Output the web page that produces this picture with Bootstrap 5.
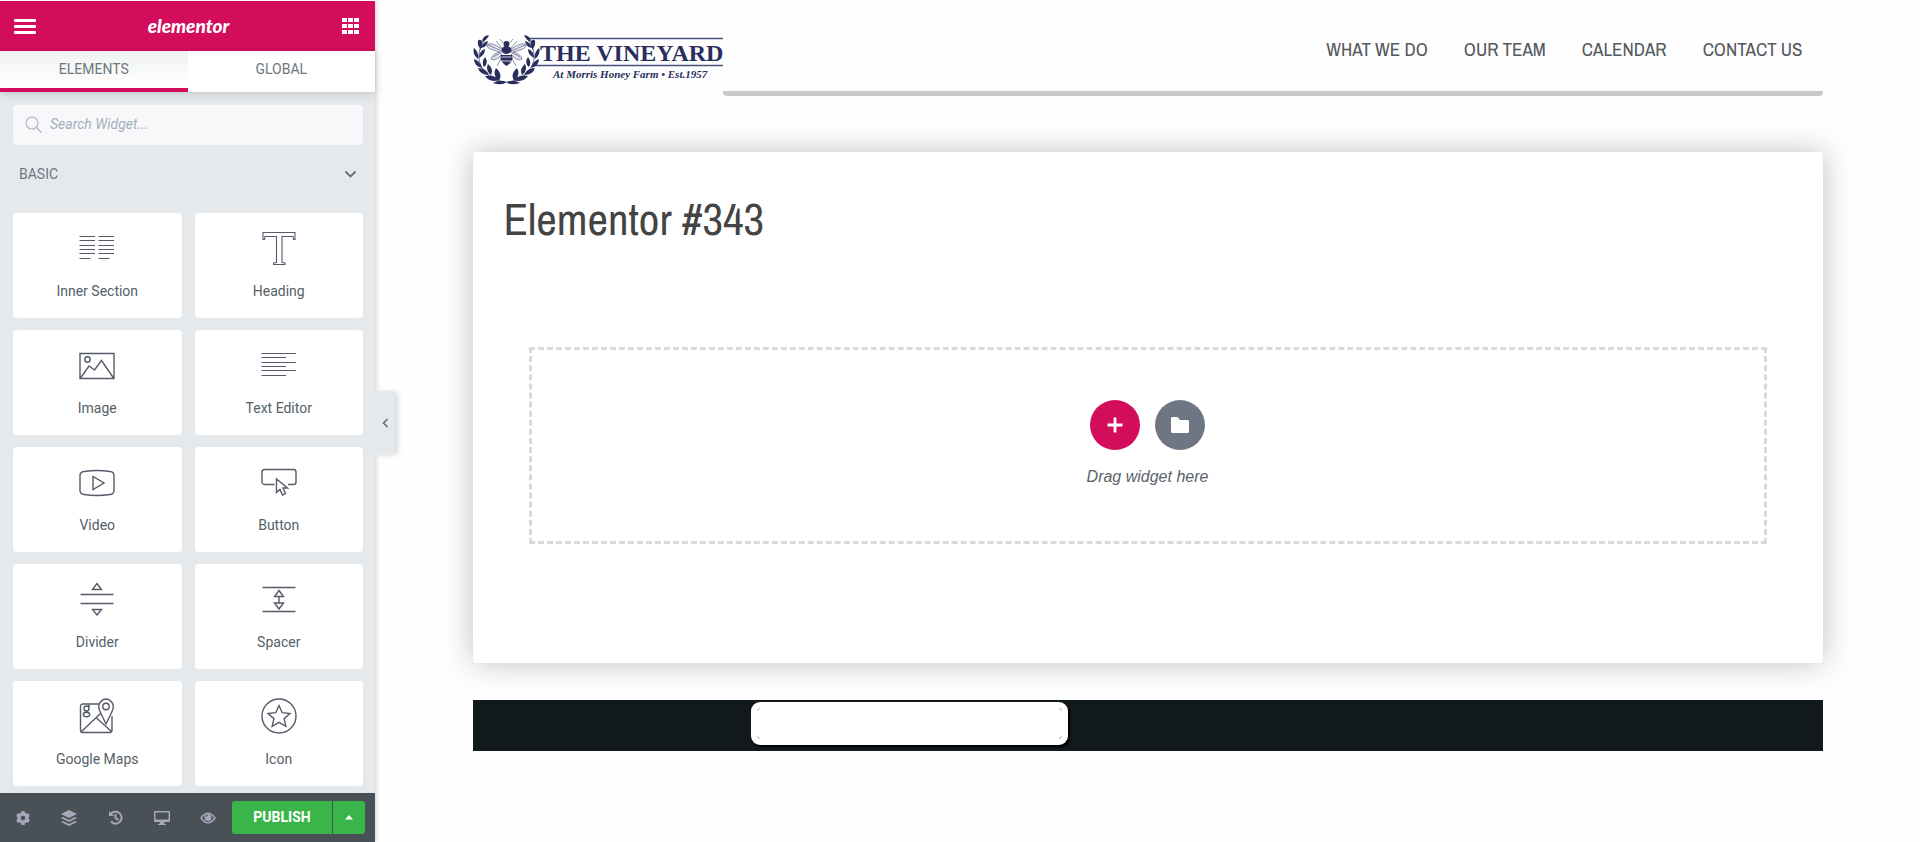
<!DOCTYPE html>
<html lang="en">
<head>
<meta charset="utf-8">
<meta name="viewport" content="width=device-width, initial-scale=1">
<title>Elementor #343</title>
<link href="https://cdn.jsdelivr.net/npm/bootstrap@5.3.0/dist/css/bootstrap.min.css" rel="stylesheet">
<style>
:root { --brand:#d30c5c; --panel:#e6e9ec; --ink:#556068; --narrow:"Archivo Narrow","Liberation Sans Narrow","Arial Narrow","Liberation Sans",sans-serif; }
body { font-family:Roboto,sans-serif; font-size:14px; color:var(--ink); background:#fefefe; }
svg { display:block; }
.editor-panel { width:375px; background:var(--panel); box-shadow:0 0 6px rgba(0,0,0,.25); border-top:1px solid #fff; z-index:2; }
.panel-top { height:50px; background:var(--brand); padding:0 14px; }
.panel-top button, .panel-tools button, .handle { border:0; background:none; padding:0; color:inherit; }
.brand-script { font:italic 900 19px/24px Lato,sans-serif; color:#fff; }
.panel-tabs { height:41px; box-shadow:0 2px 8px rgba(0,0,0,.15); background:#fff; }
.panel-tabs .nav-link { border-radius:0; color:#6d7882; font-size:14px; line-height:37px; padding:0; border-bottom:4px solid transparent; }
.panel-tabs .nav-link.active { color:#6d7882; border-color:var(--brand); background:linear-gradient(#f1f2f2,#fff); }
.panel-body { padding:13px 12px 0 13px; min-height:0; }
.search-box { height:40px; background:#f8f8fb; border-radius:4px; padding:0 12px 2px; gap:8px; }
.search-box input { font-style:italic; font-size:14px; color:var(--ink); }
.search-box input::placeholder { color:#a0b0bb; opacity:1; }
.group-toggle { height:58px; border:0; background:none; color:#6d7882; padding:0 6px; }
.widget-grid { --bs-gutter-x:13px; --bs-gutter-y:12px; padding-top:10px; }
.widget { height:105px; background:#fff; border:0; border-radius:4px; color:var(--ink); padding:0; line-height:20px; }
.widget svg { margin:0 auto 15px; fill:none; stroke:#555b68; stroke-width:1.1; }
.widget svg.firm { stroke-width:1.4; }
.panel-tools { height:49px; background:#495157; color:#a4a8b9; padding:0 10px 0 13px; }
.panel-tools .tool { width:20px; display:flex; justify-content:center; }
.tool-row { padding-right:14px; }
.panel-tools .publish { background:#39b54a; color:#fff; height:33px; font-weight:700; width:100px; border-radius:3px 0 0 3px; }
.panel-tools .more { background:#39b54a; height:33px; width:32px; border-radius:0 3px 3px 0; margin-left:1px; }
.handle { position:absolute; left:100%; top:390px; width:20px; height:63px; background:var(--panel); border-radius:0 4px 4px 0; box-shadow:3px 1px 5px rgba(0,0,0,.15); }
.site { max-width:1350px; margin:0 auto; }
.site-head { height:96px; }
.site-logo { padding-top:32px; }
.site-nav { border-bottom:5px solid #c9cacb; border-radius:0 0 4px 4px; font-family:var(--narrow); font-size:19px; padding:37px 20px 0 0; gap:36px; line-height:24px; }
.site-nav a { color:#54595f; text-decoration:none; }
.page-sheet { margin-top:56px; background:#fff; border-radius:4px; box-shadow:0 0 30px rgba(0,0,0,.25); padding:40px 56px 119px; }
.page-sheet h1 { font:400 45px/54px var(--narrow); color:#444; margin:0 0 101px -25px; }
.drop-area { border:3px dashed #d5dadf; padding:50px 0 52px; }
.round-pair { gap:15px; }
.round { width:50px; height:50px; border-radius:50%; border:0; padding:0; color:#fff; background:#6f7683; }
.round.add { background:var(--brand); }
.drop-area p { font:italic 16px/24px "Liberation Sans",sans-serif; color:#5b626a; margin:15px 0 0; }
.site-foot { margin-top:37px; height:51px; background:#12191c; padding:2px 0 6px; }
.foot-box { width:317px; margin-left:278px; height:43px; background:#fff; border-radius:9px; box-shadow:2px 2px 2px #000; padding:6px; }
</style>
</head>
<body class="d-flex vh-100 overflow-hidden">

<aside class="editor-panel d-flex flex-column flex-shrink-0 position-relative">
  <header class="panel-top d-flex align-items-center justify-content-between">
    <button aria-label="Menu"><svg width="22" height="15" fill="#fff"><path d="M1 0h20q1 0 1 1v1q0 1-1 1H1q-1 0-1-1V1q0-1 1-1zM1 6h20q1 0 1 1v1q0 1-1 1H1q-1 0-1-1V7q0-1 1-1zM1 12h20q1 0 1 1v1q0 1-1 1H1q-1 0-1-1v-1q0-1 1-1z"/></svg></button>
    <span class="brand-script">elementor</span>
    <button aria-label="Widgets"><svg width="20" height="16" fill="#fff"><path d="M1 0h5v4H1zM7 0h5v4H7zM13 0h5v4h-5zM1 6h5v4H1zM7 6h5v4H7zM13 6h5v4h-5zM1 12h5v4H1zM7 12h5v4H7zM13 12h5v4h-5z"/></svg></button>
  </header>
  <nav class="panel-tabs nav nav-justified flex-nowrap position-relative">
    <a class="nav-link active" href="#elements">ELEMENTS</a>
    <a class="nav-link" href="#global">GLOBAL</a>
  </nav>
  <div class="panel-body flex-grow-1 overflow-hidden" id="elements">
    <label class="search-box d-flex align-items-center">
      <svg width="17" height="17" fill="none" stroke="#a0b5bd" stroke-width="1.1"><circle cx="7" cy="7" r="6"/><path d="M11.500 11.500l5 5"/></svg>
      <input class="border-0 bg-transparent flex-grow-1 p-0" type="search" placeholder="Search Widget..." aria-label="Search widget">
    </label>
    <button class="group-toggle w-100 d-flex align-items-center justify-content-between"><span>BASIC</span>
      <svg width="13" height="8" fill="none" stroke="#65707a" stroke-width="1.800"><path d="M1.500 1.500l5 5 5-5"/></svg></button>
    <div class="widget-grid row row-cols-2">
      <div class="col"><button class="widget w-100"><svg width="36" height="36"><path d="M.500 6.500h15.500M19.500 6.500h15.500M.500 10.500h15.500M19.500 10.500h15.500M.500 15.500h15.500M19.500 15.500h15.500M.500 19.500h15.500M19.500 19.500h15.500M.500 23.500h15.500M19.500 23.500h15.500M.500 28.500h11M19.500 28.500h11"/></svg>Inner Section</button></div>
      <div class="col"><button class="widget w-100"><svg width="36" height="36"><path d="M2 2.500h32v7h-1.500l-.500-3H21v26l3 .500v1.500H12.500V33l3-.500v-26H4l-.500 3H2z"/></svg>Heading</button></div>
      <div class="col"><button class="widget w-100"><svg class="firm" width="36" height="36"><path d="M1 6.500h34v25H1zM1.500 31l8.500-12 5.500 4 7-9.500L34.500 31"/><circle cx="8.500" cy="12.500" r="2.700"/></svg>Image</button></div>
      <div class="col"><button class="widget w-100"><svg width="36" height="36"><path d="M.500 6.500H35M.500 10.500H25M.500 15.500H35M.500 19.500H25M.500 23.500H35M.500 28.500H25"/></svg>Text Editor</button></div>
      <div class="col"><button class="widget w-100"><svg class="firm" width="36" height="36"><path d="M5 7.500q13-2 26 0 4 .500 4 4v15q0 3.500-4 4-13 2-26 0-4-.500-4-4v-15q0-3.500 4-4zM14 12.500v13L25 19z"/></svg>Video</button></div>
      <div class="col"><button class="widget w-100"><svg class="firm" width="36" height="36"><path d="M13.500 20.500h-10q-2.500 0-2.500-2.500V8q0-2.500 2.500-2.500h29Q35 5.500 35 8v10q0 2.500-2.500 2.500H27M15.500 15v13.500l3.500-3 2.500 5.500 3-1.500-2.500-5.500h4.500z"/></svg>Button</button></div>
      <div class="col"><button class="widget w-100"><svg class="firm" width="36" height="36"><path d="M1.500 13.500h33M1.500 22.500h33M18 2.500l4.500 6h-9zM18 34l4.500-5.500h-9z"/></svg>Divider</button></div>
      <div class="col"><button class="widget w-100"><svg class="firm" width="36" height="36"><path d="M1.500 6.500h33M1.500 30.500h33M18 9.500l4.500 6h-9zM18 28l4.500-6h-9zM18 15.500V22"/></svg>Spacer</button></div>
      <div class="col"><button class="widget w-100"><svg class="firm" width="36" height="36"><path d="M19.500 6H4Q1.500 6 1.500 8.500V32q0 2.500 2.500 2.500h26.500q2.500 0 2.500-2.500V18M2.500 33.500L21.500 15.500M17 19.500l15.500 14M27 26l-6-12.500q-2.500-5.500 0-9Q23.500 1 27 1t6 3.500q2.500 3.500 0 9z"/><circle cx="27" cy="8.500" r="3.200"/><circle cx="7.500" cy="10.500" r="2.500"/><ellipse cx="7.500" cy="16.500" rx="3.200" ry="2.300"/><path d="M9 8l2-.500M6 12.500l2.500 1.700"/></svg>Google Maps</button></div>
      <div class="col"><button class="widget w-100"><svg class="firm" width="36" height="36"><circle cx="18" cy="18" r="17"/><path d="M18 7.500l3.200 7.200 7.800.800-5.900 5.100 1.800 7.700-6.900-4-6.900 4 1.800-7.700L7 15.500l7.800-.800z"/></svg>Icon</button></div>
    </div>
  </div>
  <footer class="panel-tools d-flex align-items-center">
    <div class="tool-row d-flex flex-grow-1 justify-content-between align-items-center">
      <button class="tool" aria-label="Settings"><svg width="18" height="16" viewBox="0 0 18 16"><circle cx="9" cy="8" r="4" fill="none" stroke="currentColor" stroke-width="3.500"/><path d="M9 1v14M3 4.500l12 7M3 11.500l12-7" stroke="currentColor" stroke-width="3.500"/><circle cx="9" cy="8" r="2.300" fill="#495157"/></svg></button>
      <button class="tool" aria-label="Navigator"><svg width="16" height="16" fill="currentColor"><path d="M8 0l8 4-8 4-8-4zM2 7l6 3 6-3 2 1-8 4-8-4zM2 11l6 3 6-3 2 1-8 4-8-4z"/></svg></button>
      <button class="tool" aria-label="History"><svg width="15" height="15" fill="none" stroke="currentColor" stroke-width="2"><path d="M2.500 4.500A6 6 0 1 1 3 11.500M7.500 4v4l3 2"/><path d="M1 1v5h5z" fill="currentColor" stroke="none"/></svg></button>
      <button class="tool" aria-label="Responsive mode"><svg width="16" height="14" fill="currentColor"><path fill-rule="evenodd" d="M1 0h14q1 0 1 1v9q0 1-1 1h-5l.500 2H12v1H4v-1h1.500L6 11H1q-1 0-1-1V1q0-1 1-1zm.500 1.500v7h13v-7z"/></svg></button>
      <button class="tool" aria-label="Preview"><svg width="16" height="12" fill="none" stroke="currentColor"><path stroke-width="1.500" d="M1 6q7-9.500 14 0-7 9.500-14 0z"/><circle cx="8" cy="5.500" r="3.500" fill="currentColor" stroke="none"/><path d="M6 5q.500-2 2-2" stroke="#495157"/></svg></button>
    </div>
    <button class="publish">PUBLISH</button>
    <button class="more d-flex align-items-center justify-content-center" aria-label="Save options"><svg width="8" height="5" fill="#fff"><path d="M4 0l4 4.500H0z"/></svg></button>
  </footer>
  <button class="handle d-flex align-items-center justify-content-center" aria-label="Collapse panel"><svg width="7" height="10" fill="none" stroke="#5f6870" stroke-width="1.600"><path d="M5.500 1l-4 4 4 4"/></svg></button>
</aside>

<main class="flex-grow-1 overflow-hidden px-3">
  <div class="site">
    <header class="site-head d-flex">
      <a class="site-logo" href="#home" aria-label="The Vineyard at Morris Honey Farm">
        <svg width="250" height="56" fill="#292e5c">
          <path d="M57 6.500h193M62 33.500h188" stroke="#4a4f7a" stroke-width="1.400"/>
          <defs><g id="branch">
            <path d="M15 4Q-3 25 14 42 20 48 31 50" fill="none" stroke="#292e5c" stroke-width=".700"/>
            <path d="M16 3q-7 1-7 7 5-2 7-7zM9 9q-5-4-4 4 2 3 2 5 3-4 2-9zM15 9q-5 1-7 7 6-1 7-7zM1 16q-2 6 4 11 1-7-4-11zM12 17q-6 2-6 9 6-3 6-9zM1 27q0 7 8 9-2-7-8-9zM12 25q-4 5-1 10 5-4 1-10zM5 36q2 7 11 7-3-7-11-7zM15 32q-3 6 3 11 3-6-3-11zM12 44q5 7 14 4-5-6-14-4zM23 36q-4 7 3 13 4-7-3-13zM20 51q6-4 14-1-5 4-14 1z"/>
          </g></defs>
          <use href="#branch"/><use href="#branch" transform="matrix(-1 0 0 1 67 0)"/>
          <g stroke="#292e5c" stroke-width=".500">
            <path d="M29 17Q17 9 14 13q-1 4 13 7-8 2-9 7 5 3 11-5M38 17q12-8 15-4 1 4-13 7 8 2 9 7-5 3-11-5" fill="#e2e3ea"/>
            <path d="M15 13l14 6M52 13l-14 6M20 25l9-5M47 25l-9-5M30 11l-3-4M37 11l3-4M29 25l-5 9M38 25l5 9M29 16l-6-7M38 16l6-7" fill="none"/>
          </g>
          <circle cx="33.500" cy="12" r="3"/><ellipse cx="33.500" cy="18" rx="5" ry="4"/>
          <path d="M28 23h11q2 6-5.500 11Q26 29 28 23z"/><path d="M28.500 25h10M28.500 29h10" stroke="#fff" stroke-width=".800"/>
          <text x="67" y="29" font-family="Liberation Serif,serif" font-weight="700" font-size="24">THE VINEYARD</text>
          <text x="80" y="46" font-family="Liberation Serif,serif" font-weight="700" font-style="italic" font-size="11">At Morris Honey Farm • Est.1957</text>
        </svg>
      </a>
      <nav class="site-nav d-flex flex-grow-1 justify-content-end">
        <a href="#what">WHAT WE DO</a><a href="#team">OUR TEAM</a><a href="#calendar">CALENDAR</a><a href="#contact">CONTACT US</a>
      </nav>
    </header>
    <section class="page-sheet">
      <h1>Elementor #343</h1>
      <div class="drop-area text-center">
        <div class="round-pair d-flex justify-content-center">
          <button class="round add d-flex align-items-center justify-content-center" aria-label="Add new section"><svg width="16" height="16" stroke="#fff" stroke-width="2.800"><path d="M8 .500v15M.500 8h15"/></svg></button>
          <button class="round d-flex align-items-center justify-content-center" aria-label="Add template"><svg width="20" height="16" fill="#fff"><path d="M2 0h5q1 0 1.500 1L10 3h7.500Q19 3 19 4.500v10q0 1.500-1.500 1.500h-15Q1 16 1 14.500V1.500Q1 0 2 0z"/></svg></button>
        </div>
        <p>Drag widget here</p>
      </div>
    </section>
    <footer class="site-foot">
      <div class="foot-box d-flex flex-column justify-content-between">
        <div class="d-flex justify-content-between"><svg width="3" height="3" fill="none" stroke="#bbb"><path d="M.500 3q0-2.500 2.500-2.500"/></svg><svg width="3" height="3" fill="none" stroke="#bbb"><path d="M0 .500q2.500 0 2.500 2.500"/></svg></div>
        <div class="d-flex justify-content-between"><svg width="3" height="3" fill="none" stroke="#bbb"><path d="M.500 0q0 2.500 2.500 2.500"/></svg><svg width="3" height="3" fill="none" stroke="#bbb"><path d="M0 2.500q2.500 0 2.500-2.500"/></svg></div>
      </div>
    </footer>
  </div>
</main>
<script src="https://cdn.jsdelivr.net/npm/bootstrap@5.3.0/dist/js/bootstrap.bundle.min.js"></script>
</body>
</html>
